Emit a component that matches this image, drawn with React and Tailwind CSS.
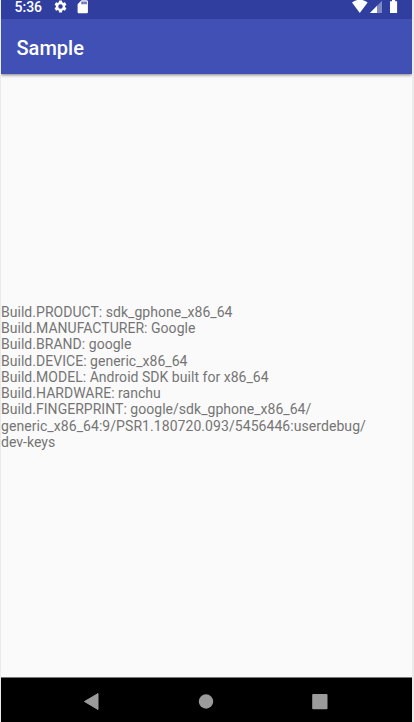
const lines = [
  'Build.PRODUCT: sdk_gphone_x86_64',
  'Build.MANUFACTURER: Google',
  'Build.BRAND: google',
  'Build.DEVICE: generic_x86_64',
  'Build.MODEL: Android SDK built for x86_64',
  'Build.HARDWARE: ranchu',
  'Build.FINGERPRINT: google/sdk_gphone_x86_64/',
  'generic_x86_64:9/PSR1.180720.093/5456446:userdebug/',
  'dev-keys',
];

function GearIcon() {
  return (
    <svg className="ml-[10.5px] size-[15px] shrink-0" viewBox="0 0 24 24" fill="#fff">
      <path d="M19.14 12.94c.04-.3.06-.61.06-.94s-.02-.64-.07-.94l2.03-1.58a.49.49 0 0 0 .12-.61l-1.92-3.32a.49.49 0 0 0-.59-.22l-2.39.96a7 7 0 0 0-1.62-.94l-.36-2.54A.48.48 0 0 0 13.92 2.4h-3.84a.48.48 0 0 0-.47.41l-.36 2.54c-.59.24-1.13.57-1.62.94l-2.39-.96a.48.48 0 0 0-.59.22L2.74 8.87a.48.48 0 0 0 .12.61l2.03 1.58c-.05.3-.09.63-.09.94s.02.64.07.94l-2.03 1.58a.49.49 0 0 0-.12.61l1.92 3.32c.12.22.37.29.59.22l2.39-.96c.5.38 1.03.7 1.62.94l.36 2.54c.05.24.24.41.48.41h3.84c.24 0 .44-.17.47-.41l.36-2.54a7 7 0 0 0 1.62-.94l2.39.96c.22.08.47 0 .59-.22l1.92-3.32a.48.48 0 0 0-.12-.61zM12 15.6A3.6 3.6 0 1 1 12 8.4a3.6 3.6 0 0 1 0 7.2z" />
    </svg>
  );
}

function SdCardIcon() {
  return (
    <svg className="ml-[7px] size-[15.5px] shrink-0" viewBox="0 0 24 24" fill="#fff">
      <path d="M18 2h-8L4.02 8 4 20c0 1.1.9 2 2 2h12c1.1 0 2-.9 2-2V4c0-1.1-.9-2-2-2zm-6 6h-2V4h2zm3 0h-2V4h2zm3 0h-2V4h2z" />
    </svg>
  );
}

export default function App() {
  return (
    <div className="flex h-[722px] w-[414px] flex-col overflow-hidden border-l border-r-2 border-[#ebebeb] bg-[#fafafa] font-['Roboto',sans-serif]">
      <header className="shrink-0 bg-[#4050b5] shadow-[0_1px_3px_rgba(0,0,0,0.5)]">
        <div className="flex h-[18.5px] justify-between bg-[#303f9f] pl-[13.5px] text-white">
          <div className="flex h-[13px] items-center">
            <span className="pt-px text-[14px] leading-[14px] font-medium">5:36</span>
            <GearIcon />
            <SdCardIcon />
          </div>
          <svg className="h-[14px] w-[62px]" viewBox="350 0 62 14" fill="#fff">
            <path d="M352 2.600C356.200-1.200 363.400-1.200 367.600 2.600L359.800 13z" />
            <path d="M382 .7V13H370z" opacity=".38" />
            <path d="M377 5.800V13H370z" />
            <path d="M392 0h3.200v1.200h1.900V13H390V1.200h2z" />
          </svg>
        </div>
        <div className="flex h-[55.5px] items-center pt-[3px] pl-[15.5px]">
          <h1 className="text-[20px] leading-6 font-medium text-white">Sample</h1>
        </div>
      </header>
      <main className="flex min-h-0 flex-1 items-center pt-[3px]">
        <div className="text-[14px] leading-[16.25px] tracking-[0.03px] whitespace-nowrap text-[#757575]">
          {lines.map((line) => (
            <p key={line} className="nth-8:tracking-[0.065px]">{line}</p>
          ))}
        </div>
      </main>
      <nav className="h-[45px] shrink-0 border-t border-[#777] bg-black">
        <svg className="h-11 w-[411px]" viewBox="1 678 411 44" fill="#9b9b9b">
          <path d="M84.500 701.500 98 693.600V709.500z" stroke="#9b9b9b" strokeWidth="1" strokeLinejoin="round" />
          <circle cx="206" cy="701.500" r="7.200" />
          <rect x="312.200" y="694" width="15.300" height="15.200" rx="1" />
        </svg>
      </nav>
    </div>
  );
}
